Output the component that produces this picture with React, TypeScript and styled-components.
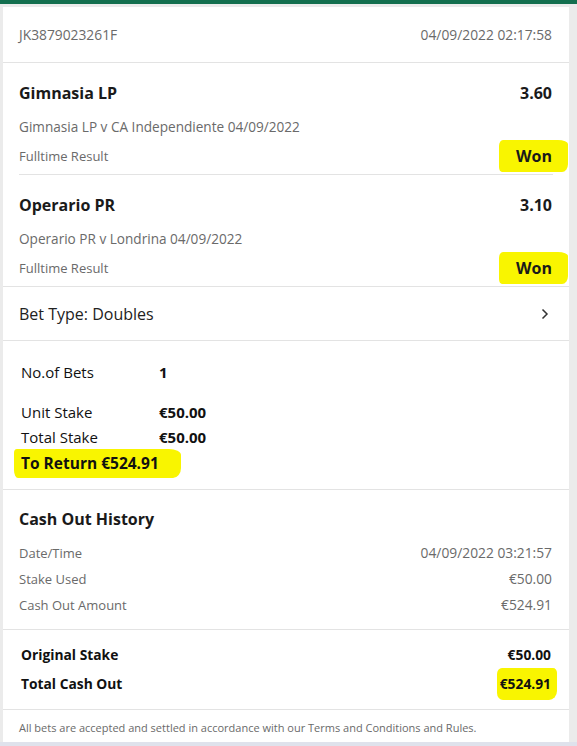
import React from "react";
import styled, { createGlobalStyle } from "styled-components";

const GlobalStyle = createGlobalStyle`
  html, body {
    margin: 0;
    padding: 0;
    background: #ebebeb;
  }
  body {
    font-family: "Open Sans", "Noto Sans", "Liberation Sans", sans-serif;
    color: #1a1a1a;
    -webkit-font-smoothing: antialiased;
  }
  * { box-sizing: border-box; }
`;

const TopBar = styled.div`
  height: 4px;
  background: #136f4f;
`;

const Page = styled.div`
  padding: 3px 8px 0 3px;
  background: #ebebeb;
`;

const Card = styled.div`
  background: #ffffff;
`;

const BottomStrip = styled.div`
  height: 8px;
  background: #dfe2ec;
`;

const Header = styled.div`
  display: flex;
  justify-content: space-between;
  align-items: center;
  height: 56px;
  padding: 0 17px 0 16px;
  border-bottom: 1px solid #e3e3e3;
  font-size: 13.8px;
  color: #6a6a6a;
`;

const SelectionList = styled.div`
  padding: 0 16px;
  border-bottom: 1px solid #e3e3e3;
`;

const Selection = styled.div`
  padding: 18px 1px 8px 0;
  & + & {
    border-top: 1px solid #e3e3e3;
  }
`;

const SelRow = styled.div<{ $gap?: number }>`
  display: flex;
  justify-content: space-between;
  align-items: center;
  margin-top: ${(p) => p.$gap ?? 0}px;
`;

const SelName = styled.div`
  font-size: 16px;
  font-weight: 700;
  line-height: 24px;
`;

const SubText = styled.div<{ $size?: number }>`
  font-size: ${(p) => p.$size ?? 13}px;
  line-height: 20px;
  color: #6a6a6a;
`;

const Highlight = styled.span<{ $inset?: string; $radius?: string }>`
  position: relative;
  z-index: 0;
  &::before {
    content: "";
    position: absolute;
    inset: ${(p) => p.$inset ?? "-5px -16px -5px -17px"};
    background: #f9f500;
    border-radius: ${(p) => p.$radius ?? "4px 10px 6px 3px / 6px 4px 8px 5px"};
    z-index: -1;
  }
`;

const WonText = styled.div`
  font-size: 16px;
  font-weight: 700;
  line-height: 20px;
`;

const BetType = styled.div`
  display: flex;
  justify-content: space-between;
  align-items: center;
  height: 54px;
  padding: 0 20px 0 16px;
  border-bottom: 1px solid #e3e3e3;
  font-size: 16px;
  color: #222;
`;

const Stakes = styled.div`
  padding: 20px 18px 15px 18px;
  border-bottom: 1px solid #e3e3e3;
`;

const StakeRow = styled.div<{ $mt?: number }>`
  display: grid;
  grid-template-columns: 138px 1fr;
  align-items: center;
  line-height: 22px;
  font-size: 15px;
  color: #111;
  margin-top: ${(p) => p.$mt ?? 0}px;
`;

const StakeValue = styled.span`
  font-weight: 700;
`;

const ReturnRow = styled.div`
  margin-top: 4px;
  font-size: 15.5px;
  font-weight: 700;
  line-height: 22px;
  color: #111;
`;

const History = styled.div`
  padding: 17px 17px 11px 16px;
  border-bottom: 1px solid #e3e3e3;
`;

const HistoryTitle = styled.div`
  font-size: 16px;
  font-weight: 700;
  line-height: 24px;
  margin-bottom: 9px;
`;

const InfoRow = styled.div`
  display: flex;
  justify-content: space-between;
  align-items: center;
  font-size: 13px;
  line-height: 26px;
  color: #6a6a6a;
`;

const InfoValue = styled.span`
  font-size: 13.8px;
`;

const Summary = styled.div`
  padding: 10px 18px 11px 18px;
  border-bottom: 1px solid #e3e3e3;
`;

const SumRow = styled.div`
  display: flex;
  justify-content: space-between;
  align-items: center;
  font-size: 13.8px;
  font-weight: 700;
  line-height: 29px;
  color: #111;
`;

const Footer = styled.div`
  padding: 10px 16px 0 16px;
  height: 32px;
  font-size: 11px;
  color: #6a6a6a;
`;

const Chevron = () => (
  <svg width="8" height="12" viewBox="0 0 8 12" fill="none">
    <polyline points="1.5,1.5 6,6 1.5,10.5" stroke="#333" strokeWidth="1.5" />
  </svg>
);

const selections = [
  { name: "Gimnasia LP", odds: "3.60", event: "Gimnasia LP v CA Independiente 04/09/2022" },
  { name: "Operario PR", odds: "3.10", event: "Operario PR v Londrina 04/09/2022" },
];

const history = [
  ["Date/Time", "04/09/2022 03:21:57"],
  ["Stake Used", "€50.00"],
  ["Cash Out Amount", "€524.91"],
];

export default function App() {
  return (
    <>
      <GlobalStyle />
      <TopBar />
      <Page>
        <Card>
          <Header>
            <span>JK3879023261F</span>
            <span>04/09/2022 02:17:58</span>
          </Header>
          <SelectionList>
            {selections.map((s) => (
              <Selection key={s.name}>
                <SelRow>
                  <SelName>{s.name}</SelName>
                  <SelName>{s.odds}</SelName>
                </SelRow>
                <SelRow $gap={12}>
                  <SubText $size={13.6}>{s.event}</SubText>
                </SelRow>
                <SelRow $gap={9}>
                  <SubText>Fulltime Result</SubText>
                  <WonText>
                    <Highlight>Won</Highlight>
                  </WonText>
                </SelRow>
              </Selection>
            ))}
          </SelectionList>
          <BetType>
            <span>Bet Type: Doubles</span>
            <Chevron />
          </BetType>
          <Stakes>
            <StakeRow>
              <span>No.of Bets</span>
              <StakeValue>1</StakeValue>
            </StakeRow>
            <StakeRow $mt={18}>
              <span>Unit Stake</span>
              <StakeValue>€50.00</StakeValue>
            </StakeRow>
            <StakeRow $mt={3}>
              <span>Total Stake</span>
              <StakeValue>€50.00</StakeValue>
            </StakeRow>
            <ReturnRow>
              <Highlight $inset="-3px -22px -4px -7px" $radius="3px 12px 8px 4px / 4px 6px 10px 8px">
                To Return €524.91
              </Highlight>
            </ReturnRow>
          </Stakes>
          <History>
            <HistoryTitle>Cash Out History</HistoryTitle>
            {history.map(([label, value]) => (
              <InfoRow key={label}>
                <span>{label}</span>
                <InfoValue>{value}</InfoValue>
              </InfoRow>
            ))}
          </History>
          <Summary>
            <SumRow>
              <span>Original Stake</span>
              <span>€50.00</span>
            </SumRow>
            <SumRow>
              <span>Total Cash Out</span>
              <span>
                <Highlight $inset="-6px -6px -7px -3px" $radius="5px 4px 8px 6px / 6px 5px 9px 7px">
                  €524.91
                </Highlight>
              </span>
            </SumRow>
          </Summary>
          <Footer>
            All bets are accepted and settled in accordance with our Terms and Conditions and Rules.
          </Footer>
        </Card>
      </Page>
      <BottomStrip />
    </>
  );
}
